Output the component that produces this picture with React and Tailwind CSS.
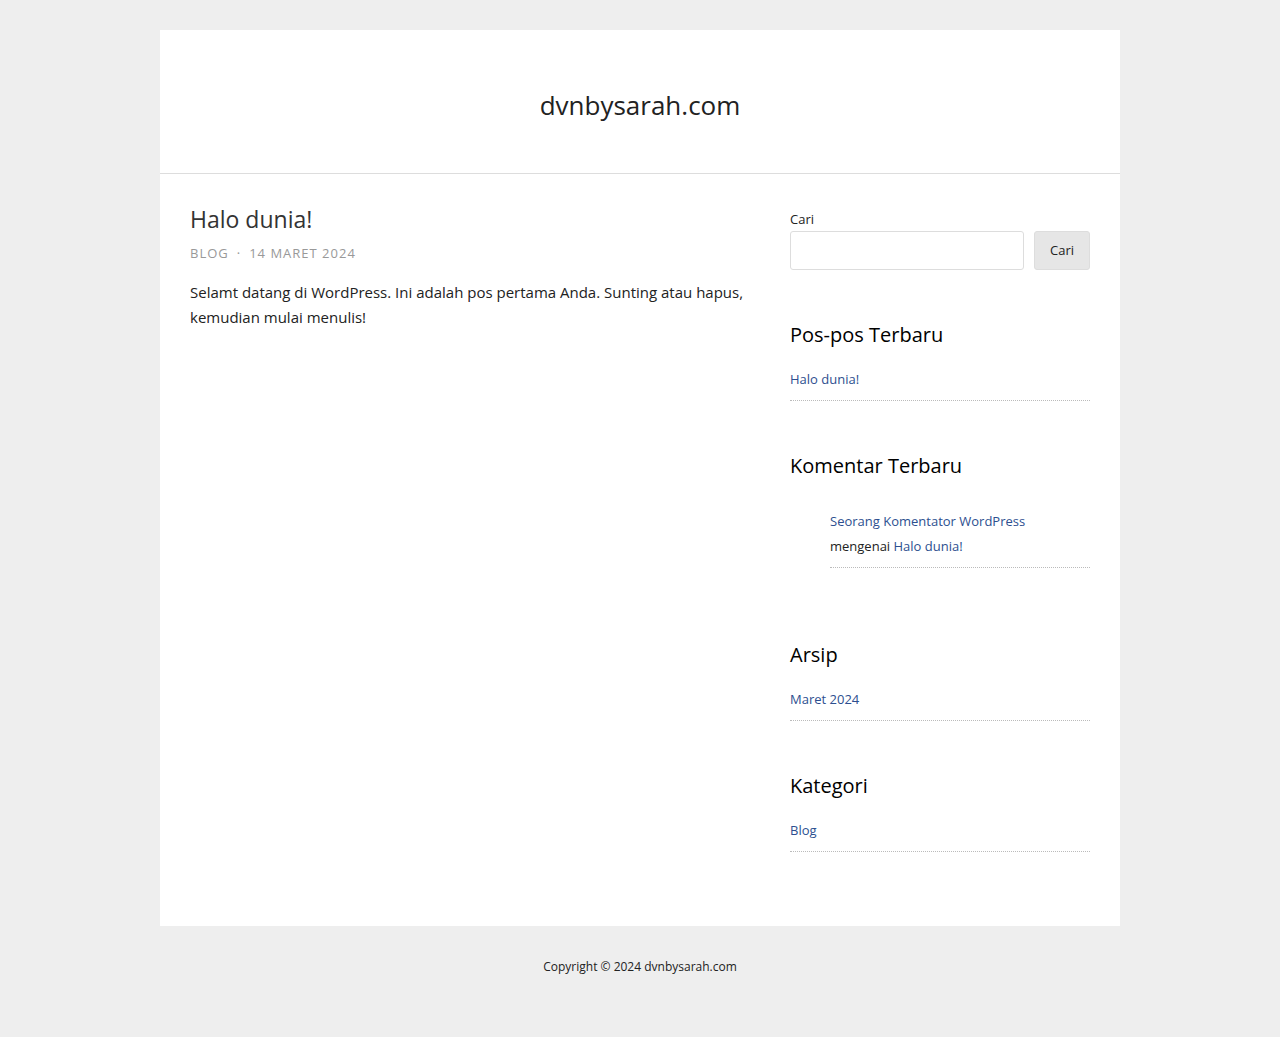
const links = "text-[#2d4f8f] hover:underline";
const item = "border-b border-dotted border-[#bbb] pt-px pb-2 text-[13px] leading-[25px]";

function Widget({ title, children }) {
  return (
    <section className="mb-[50px]">
      <h2 className="mb-4 text-xl leading-[30px] text-black">{title}</h2>
      {children}
    </section>
  );
}

export default function App() {
  return (
    <div className="min-h-screen bg-[#eee] px-4 pt-[30px] font-['Open_Sans','Noto_Sans',sans-serif] text-[#222]">
      <div className="mx-auto max-w-[960px] bg-white">
        <header className="border-b border-[#ddd] px-[30px] pt-[58px] pb-[50px] text-center">
          <h1 className="text-[26px] leading-[35px]">
            <a href="#">dvnbysarah.com</a>
          </h1>
        </header>
        <div className="flex flex-col gap-10 p-[30px] pb-6 md:flex-row">
          <main className="min-w-0 flex-1">
            <h2 className="text-[23px] leading-[31px] text-[#333]">
              <a href="#">Halo dunia!</a>
            </h2>
            <p className="mt-2 text-[13px] leading-5 tracking-[1px] text-[#999]">
              <a href="#">BLOG</a>
              <span className="mx-2">·</span>
              <a href="#">14 MARET 2024</a>
            </p>
            <p className="mt-[17px] text-[15px] leading-[25px]">
              Selamt datang di WordPress. Ini adalah pos pertama Anda. Sunting atau hapus, kemudian mulai menulis!
            </p>
          </main>
          <aside className="w-full shrink-0 pt-1 md:w-[300px]">
            <form className="mb-[50px]">
              <label htmlFor="search" className="block text-[13px] leading-[23px]">Cari</label>
              <div className="flex gap-[10px]">
                <input id="search" type="search" className="h-[39px] min-w-0 flex-1 rounded-[3px] border border-[#ddd] px-2" />
                <button type="button" className="h-[39px] rounded-[3px] border border-[#ddd] bg-[#e6e6e6] px-[15px] text-[13px]">Cari</button>
              </div>
            </form>
            <Widget title="Pos-pos Terbaru">
              <ul><li className={item}><a href="#" className={links}>Halo dunia!</a></li></ul>
            </Widget>
            <Widget title="Komentar Terbaru">
              <ol className="pt-[11px] pb-[22px] pl-10">
                <li className={item}>
                  <a href="#" className={links}>Seorang Komentator WordPress</a>{" "}
                  <span className="whitespace-nowrap">mengenai <a href="#" className={links}>Halo dunia!</a></span>
                </li>
              </ol>
            </Widget>
            <Widget title="Arsip">
              <ul><li className={item}><a href="#" className={links}>Maret 2024</a></li></ul>
            </Widget>
            <Widget title="Kategori">
              <ul><li className={item}><a href="#" className={links}>Blog</a></li></ul>
            </Widget>
          </aside>
        </div>
      </div>
      <footer className="pt-[31px] pb-[30px] text-center text-xs leading-5">Copyright © 2024 dvnbysarah.com</footer>
    </div>
  );
}
